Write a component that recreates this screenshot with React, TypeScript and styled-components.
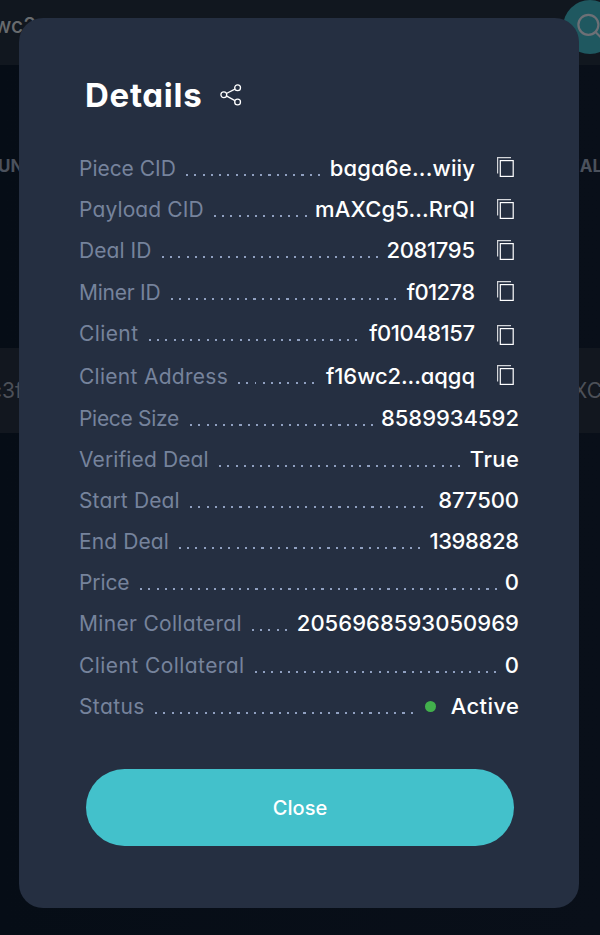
import React from 'react';
import styled, { createGlobalStyle } from 'styled-components';

const GlobalStyle = createGlobalStyle`
  * { box-sizing: border-box; }
  body {
    margin: 0;
    background: #080e17;
    font-family: Inter, "Liberation Sans", sans-serif;
    font-feature-settings: "cv11";
  }
`;

const Page = styled.div`
  position: relative;
  width: 600px;
  height: 935px;
  overflow: hidden;
  background: linear-gradient(90deg, #060d16, #090f19);
`;

/* Dimmed explorer page that sits behind the dialog */
const Backdrop = styled.div`
  display: flex;
  flex-direction: column;
  height: 100%;
  color: #54585f;
  white-space: nowrap;
`;

const SearchBar = styled.div`
  display: flex;
  justify-content: space-between;
  flex: none;
  height: 65px;
  background: #11171f;
`;

const SearchText = styled.span`
  margin-left: -6px;
  font-size: 21px;
  font-weight: 500;
  line-height: 51px;
  color: #686b6e;
`;

const SearchButton = styled.div`
  display: flex;
  align-items: center;
  justify-content: center;
  flex: none;
  width: 54px;
  height: 54px;
  margin-right: -17px;
  border-radius: 50%;
  background: #1f5860;
`;

const TableHead = styled.div`
  display: flex;
  justify-content: space-between;
  height: 283px;
  padding-top: 89px;
  font-size: 17px;
  font-weight: 700;
  line-height: 24px;
  color: #4b515c;
`;

const TableRow = styled.div`
  display: flex;
  align-items: center;
  justify-content: space-between;
  height: 85px;
  background: #12171f;
  font-size: 21px;
  color: #4c5058;
`;

const Bleed = styled.span<{ $left?: number; $right?: number }>`
  margin-left: ${(p) => p.$left ?? 0}px;
  margin-right: ${(p) => p.$right ?? 0}px;
`;

const Dialog = styled.section`
  position: absolute;
  top: 18px;
  left: 19px;
  display: flex;
  flex-direction: column;
  width: 560px;
  height: 890px;
  padding: 57px 60px 0;
  border-radius: 24px;
  background: #252f41;
`;

const Header = styled.header`
  display: flex;
  align-items: center;
  gap: 17px;
  height: 40px;
  margin: 0 0 33px 6px;
`;

const Title = styled.h1`
  margin: 0;
  font-size: 33px;
  font-weight: 650;
  line-height: 40px;
  letter-spacing: 0.7px;
  color: #fff;
`;

const List = styled.div`
  display: flex;
  flex-direction: column;
`;

const Row = styled.div<{ $height?: number }>`
  display: flex;
  align-items: baseline;
  height: ${(p) => p.$height ?? 41.2}px;
  line-height: 41.2px;
  white-space: nowrap;
`;

const Label = styled.span<{ $tracking: number }>`
  margin-right: ${(p) => 10.5 - p.$tracking}px;
  font-size: 21px;
  letter-spacing: ${(p) => p.$tracking}px;
  color: #76839c;
`;

const Leader = styled.span`
  flex: 1;
  align-self: flex-start;
  height: 2px;
  margin-top: 26px;
  background: repeating-linear-gradient(90deg, #90a0c0 0 2px, transparent 2px 8.25px);
`;

const Value = styled.span<{ $tracking: number; $gap?: number }>`
  margin-left: ${(p) => p.$gap ?? 7.5}px;
  margin-right: ${(p) => -p.$tracking}px;
  font-size: 22px;
  font-weight: 500;
  letter-spacing: ${(p) => p.$tracking}px;
  color: #fff;
`;

const StatusDot = styled.span`
  align-self: flex-start;
  width: 11px;
  height: 11px;
  margin: 14.8px 7px 0 11px;
  border-radius: 50%;
  background: #42b04c;
`;

const CopyButton = styled.button<{ $drop?: number }>`
  align-self: flex-start;
  display: flex;
  flex: none;
  width: 22.5px;
  height: 20px;
  margin: ${(p) => 9 + (p.$drop ?? 0)}px 0 0 21.5px;
  padding: 0;
  border: 0;
  background: none;
`;

const CloseButton = styled.button`
  width: 428px;
  height: 77px;
  margin: 41.5px 0 0 7px;
  padding: 1px 0 0;
  border: 0;
  border-radius: 39px;
  background: #43c1cb;
  color: #fff;
  font: 500 20px Inter, "Liberation Sans", sans-serif;
  font-feature-settings: "cv11";
`;

const CopyIcon = () => (
  <svg width="18" height="20" viewBox="0 0 18 20" fill="none" stroke="#fff">
    <path d="M.6 16.5V.6H14" strokeWidth="1.2" opacity=".8" />
    <rect x="3.3" y="3.6" width="12.9" height="15.8" strokeWidth="1.2" />
  </svg>
);

const ShareIcon = () => (
  <svg width="24" height="24" viewBox="0 0 24 24" fill="none" stroke="#fff" strokeWidth="1.3">
    <circle cx="4.8" cy="11.7" r="2.9" />
    <circle cx="18.6" cy="4.7" r="2.9" />
    <circle cx="18.6" cy="19" r="2.9" />
    <path d="M7.4 10.5 15.9 6.1M7.4 12.9l8.5 4.7" />
  </svg>
);

const SearchIcon = () => (
  <svg width="28" height="28" viewBox="0 0 28 28" fill="none" stroke="#6d7076" strokeWidth="2.2">
    <circle cx="12.4" cy="11.8" r="10" />
    <path d="m19.5 19 6.5 6.5" />
  </svg>
);

type Detail = {
  label: string;
  value: string;
  labelTracking: number;
  valueTracking: number;
  gap?: number;
  copy?: boolean;
  active?: boolean;
  drop?: number;
  height?: number;
};

const details: Detail[] = [
  { label: 'Piece CID', value: 'baga6e...wiiy', labelTracking: -0.03, valueTracking: 0.17, copy: true },
  { label: 'Payload CID', value: 'mAXCg5...RrQI', labelTracking: 0.12, valueTracking: 0.15, copy: true, drop: 0.6 },
  { label: 'Deal ID', value: '2081795', labelTracking: 0.04, valueTracking: -0.33, copy: true, drop: 0.3 },
  { label: 'Miner ID', value: 'f01278', labelTracking: -0.24, valueTracking: -0.62, copy: true, drop: 0.3 },
  { label: 'Client', value: 'f01048157', labelTracking: 0.4, valueTracking: -0.46, copy: true, drop: 2.8, height: 43.6 },
  { label: 'Client Address', value: 'f16wc2...aqgq', labelTracking: 0.28, valueTracking: -0.08, copy: true },
  { label: 'Piece Size', value: '8589934592', labelTracking: -0.3, valueTracking: -0.02 },
  { label: 'Verified Deal', value: 'True', labelTracking: 0.12, valueTracking: 0.45 },
  { label: 'Start Deal', value: '877500', labelTracking: 0.15, valueTracking: -0.08, gap: 11 },
  { label: 'End Deal', value: '1398828', labelTracking: 0.1, valueTracking: -0.38 },
  { label: 'Price', value: '0', labelTracking: -0.1, valueTracking: 0 },
  { label: 'Miner Collateral', value: '2056968593050969', labelTracking: 0.31, valueTracking: 0.04 },
  { label: 'Client Collateral', value: '0', labelTracking: 0.43, valueTracking: 0 },
  { label: 'Status', value: 'Active', labelTracking: 0.38, valueTracking: 0.4, active: true },
];

export default function App() {
  return (
    <Page>
      <GlobalStyle />
      <Backdrop>
        <SearchBar>
          <SearchText>wc2</SearchText>
          <SearchButton>
            <SearchIcon />
          </SearchButton>
        </SearchBar>
        <TableHead>
          <Bleed $left={-2}>UN</Bleed>
          <Bleed $right={-2}>EAL</Bleed>
        </TableHead>
        <TableRow>
          <Bleed $left={-10}>c3f</Bleed>
          <Bleed $right={-2}>XC</Bleed>
        </TableRow>
      </Backdrop>
      <Dialog role="dialog" aria-label="Details">
        <Header>
          <Title>Details</Title>
          <ShareIcon />
        </Header>
        <List>
          {details.map((d) => (
            <Row key={d.label} $height={d.height}>
              <Label $tracking={d.labelTracking}>{d.label}</Label>
              <Leader />
              {d.active && <StatusDot />}
              <Value $tracking={d.valueTracking} $gap={d.gap}>{d.value}</Value>
              {d.copy && (
                <CopyButton $drop={d.drop} aria-label={`Copy ${d.label}`}>
                  <CopyIcon />
                </CopyButton>
              )}
            </Row>
          ))}
        </List>
        <CloseButton>Close</CloseButton>
      </Dialog>
    </Page>
  );
}
